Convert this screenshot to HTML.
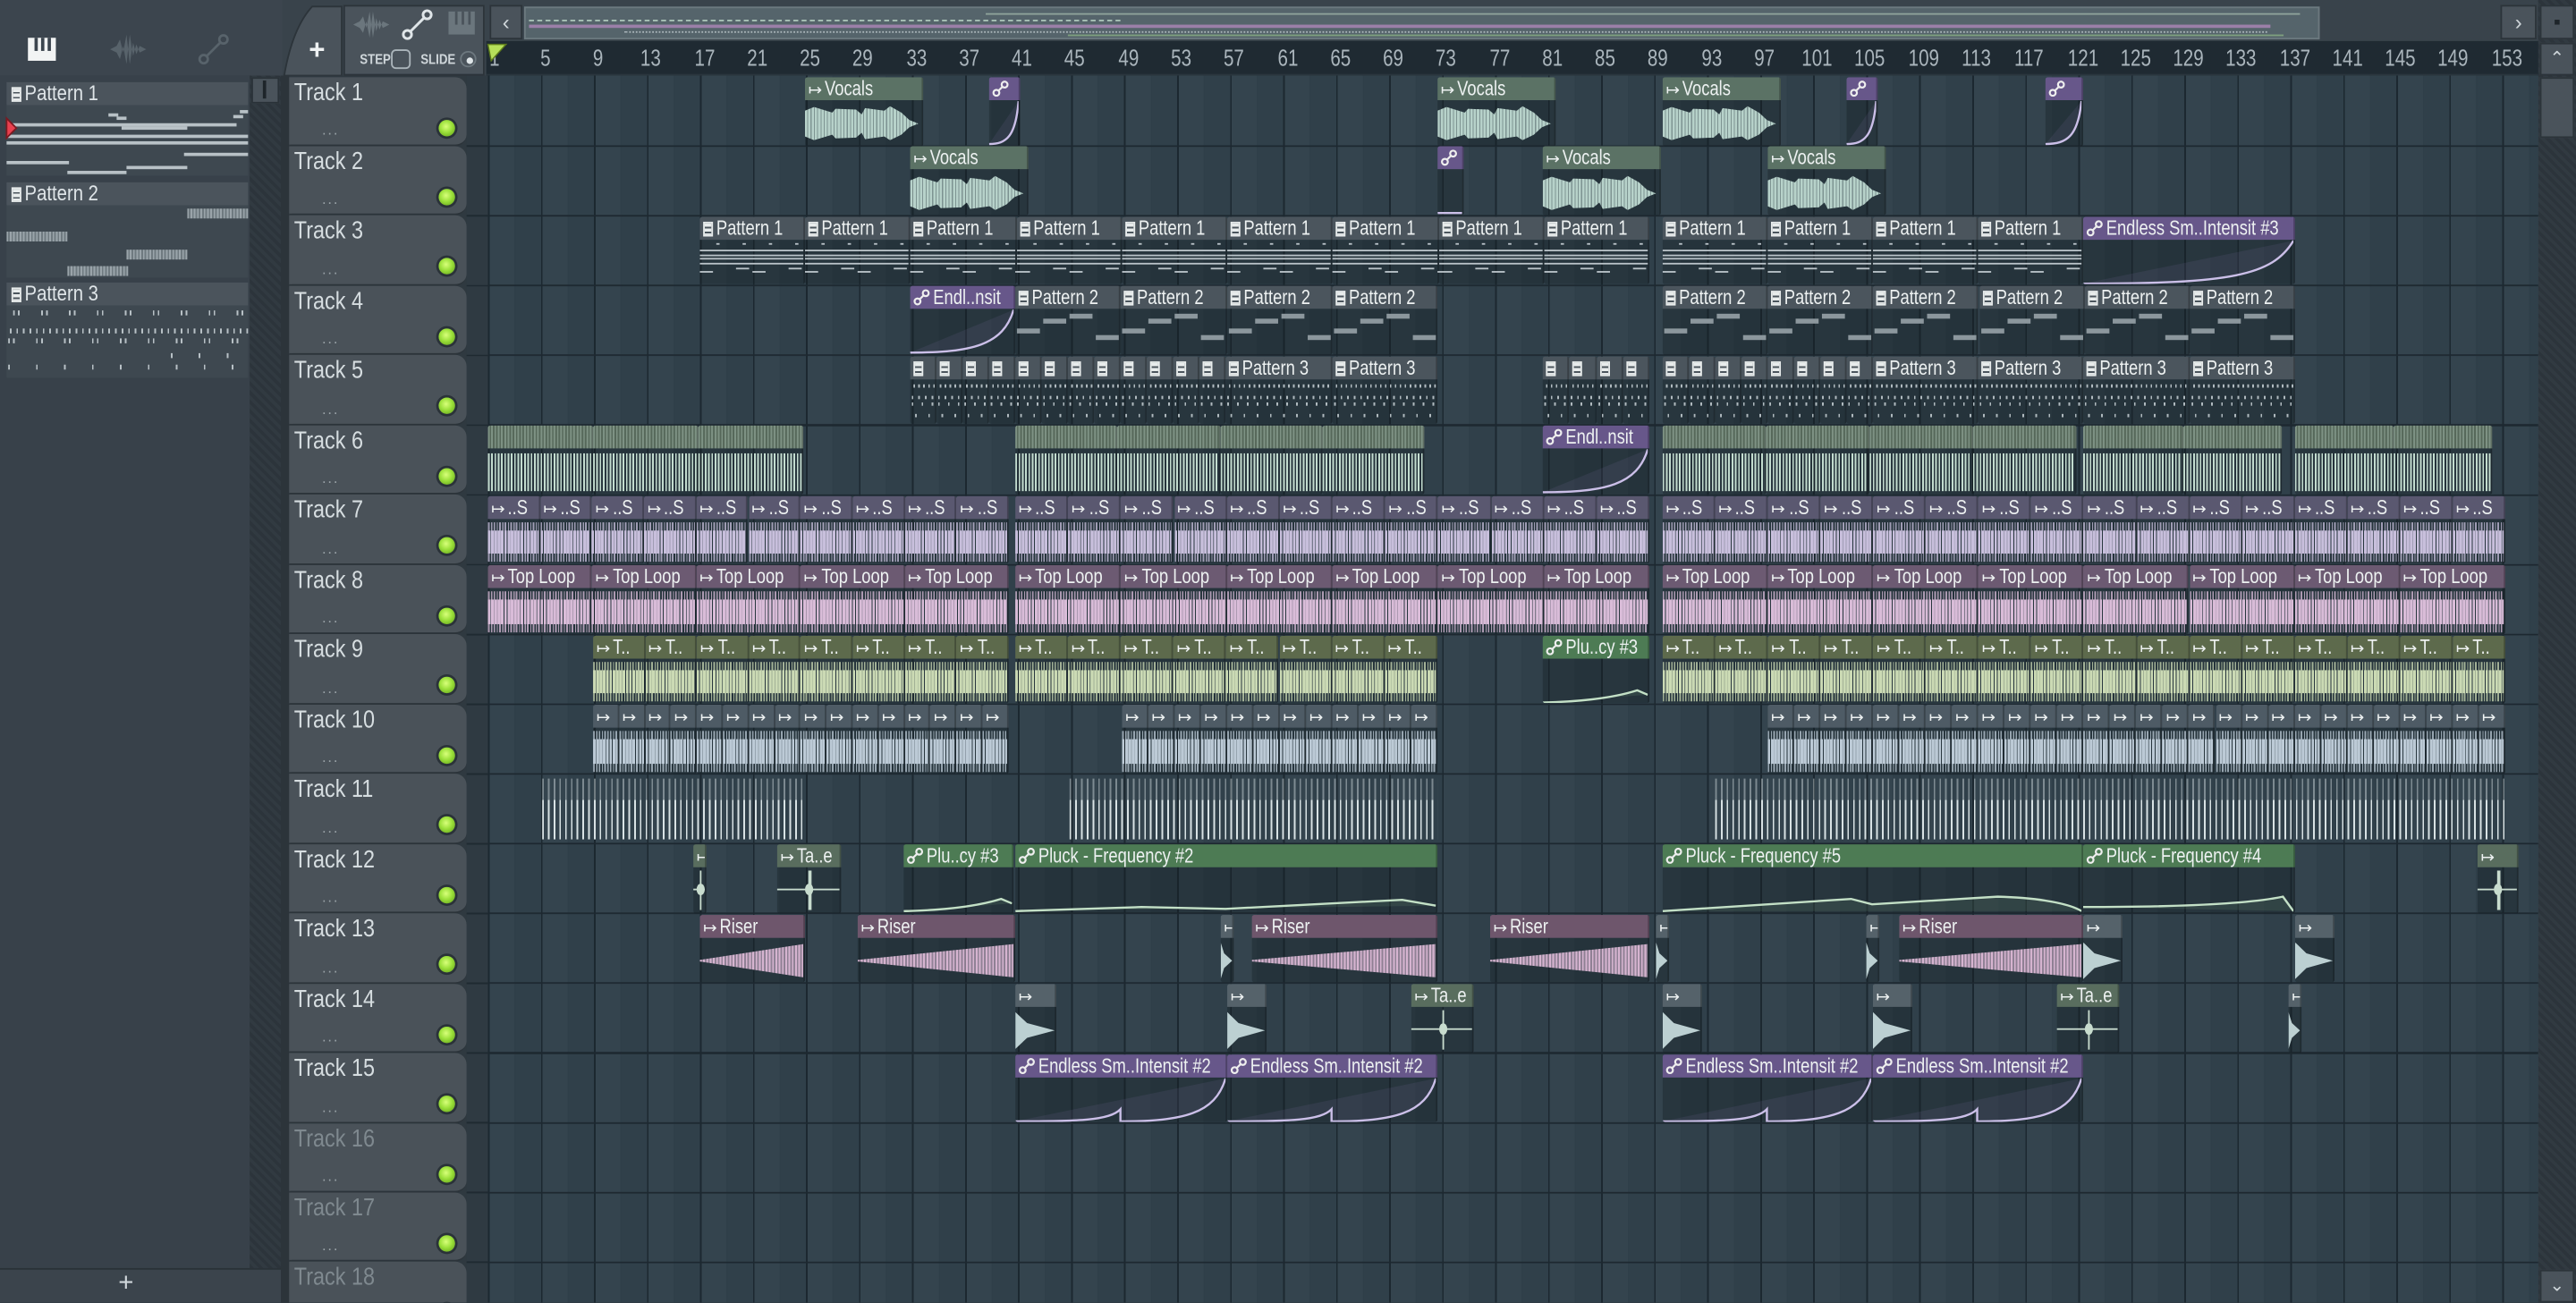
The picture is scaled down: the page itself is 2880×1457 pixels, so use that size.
<!DOCTYPE html>
<html><head><meta charset="utf-8">
<style>
html,body{margin:0;padding:0;width:2880px;height:1456px;overflow:hidden;background:#2f3940;}
#s{position:absolute;left:0;top:0;width:1568px;height:793px;transform:scale(1.83673);transform-origin:0 0;overflow:hidden;background:#2f3940;font-family:"Liberation Sans Narrow","Liberation Sans",sans-serif;color:#dfe5e8;}
.a{position:absolute;box-sizing:border-box;}
.clip{position:absolute;box-sizing:border-box;overflow:hidden;border-radius:1.5px;}
.hd{position:absolute;left:0;right:0;top:0;height:14px;white-space:nowrap;overflow:hidden;font-size:12.5px;line-height:14px;color:#edf1f1;padding-left:2px;border-right:1px solid rgba(0,0,0,.25);box-sizing:border-box;}
.hd .tx{display:inline-block;transform:scaleX(.8);transform-origin:0 50%;white-space:nowrap;}
.bd{position:absolute;left:0;right:0;top:14px;bottom:0;background:rgba(22,32,38,.38);border-right:1px solid rgba(0,0,0,.2);box-sizing:border-box;}
.pi{display:inline-block;width:6px;height:9px;margin-right:2px;vertical-align:-1px;background:repeating-linear-gradient(#e8ecec 0 2px,#4b555d 2px 3px);border:1px solid #e8ecec;box-sizing:border-box;}
.tl{position:absolute;left:176px;width:108px;background:#4a5259;border-radius:0 7px 7px 0;box-sizing:border-box;border-bottom:1px solid #2c343a;}
.tl .n{position:absolute;left:3px;top:1px;font-size:15px;color:#d6dde0;transform:scaleX(.85);transform-origin:0 0;white-space:nowrap;}
.tl .d{position:absolute;left:20px;bottom:4px;font-size:9px;color:#9aa3a8;letter-spacing:1px;}
.tl .led{position:absolute;left:91px;top:26px;width:10px;height:10px;border-radius:50%;background:radial-gradient(circle at 45% 40%,#d8ff7a 0,#9be03a 45%,#5c9a16 100%);box-shadow:0 0 0 1.5px #2a3238;}
.rn{position:absolute;top:27px;font-size:14px;color:#aab5bc;transform:translateX(-50%) scaleX(.8);}
.pt{font-size:13px;line-height:14px;padding-left:3px;white-space:nowrap;}
.pt span.t{display:inline-block;transform:scaleX(.85);transform-origin:0 50%;}
</style></head><body>
<div id="s">
<div class="a" style="left:0;top:0;width:172px;height:46px;background:#3c454e;"></div>
<div class="a" style="left:0;top:46px;width:152px;height:726px;background:#38414a;"></div>
<div class="a" style="left:152px;top:46px;width:19px;height:726px;background:repeating-linear-gradient(45deg,#2c343b 0 2px,#313a41 2px 4px);"></div>
<div class="a" style="left:153px;top:47px;width:17px;height:16px;background:#4a535b;border:1px solid #2a3238;"></div>
<div class="a" style="left:160px;top:49px;width:2px;height:11px;background:#1e252a;"></div>
<div class="a" style="left:0;top:772px;width:172px;height:21px;background:#3b444c;border-top:1px solid #2a3238;"></div>
<div class="a" style="left:72px;top:773px;font-size:16px;color:#cfd6da;">+</div>
<svg class="a" style="left:16px;top:22px" width="20" height="16" viewBox="0 0 20 16"><rect x="1" y="1" width="17" height="14" fill="#f2f4f4"/><rect x="5" y="1" width="2" height="8" fill="#3c454e"/><rect x="9" y="1" width="2" height="8" fill="#3c454e"/><rect x="13" y="1" width="2" height="8" fill="#3c454e"/></svg>
<svg class="a" style="left:66px;top:20px" width="24" height="20" viewBox="0 0 24 20"><path d="M1 10 L5 8 L7 4 L9 12 L11 1 L13 19 L15 6 L17 13 L19 8 L23 10 L19 12 L17 7 L15 14 L13 1 L11 19 L9 8 L7 16 L5 12Z" fill="#58636b"/></svg>
<svg class="a" style="left:120px;top:20px" width="20" height="20" viewBox="0 0 20 20"><circle cx="4" cy="16" r="2.5" fill="none" stroke="#58636b" stroke-width="1.5"/><circle cx="16" cy="4" r="2.5" fill="none" stroke="#58636b" stroke-width="1.5"/><line x1="6" y1="14" x2="14" y2="6" stroke="#58636b" stroke-width="1.5"/></svg>
<div class="a pt" style="left:4px;top:50px;width:147px;height:14px;background:#4b545c;"><span class="pi"></span><span class="t">Pattern 1</span></div>
<div class="a" style="left:4px;top:64px;width:147px;height:43px;background:#3e4850;">
<div class="a" style="left:62px;top:5px;width:6px;height:1.5px;background:#b8c1c6"></div><div class="a" style="left:67px;top:7px;width:6px;height:1.5px;background:#b8c1c6"></div>
<div class="a" style="left:138px;top:6px;width:6px;height:1.5px;background:#b8c1c6"></div><div class="a" style="left:142px;top:3px;width:5px;height:1.5px;background:#b8c1c6"></div>
<div class="a" style="left:0;top:11px;width:140px;height:1.5px;background:#b8c1c6"></div>
<div class="a" style="left:0;top:18px;width:147px;height:1.5px;background:#b8c1c6"></div>
<div class="a" style="left:0;top:22px;width:147px;height:1.5px;background:#b8c1c6"></div>
<div class="a" style="left:70px;top:13px;width:40px;height:1.5px;background:#b8c1c6"></div>
<div class="a" style="left:108px;top:29px;width:39px;height:1.5px;background:#b8c1c6"></div>
<div class="a" style="left:0;top:34px;width:38px;height:1.5px;background:#b8c1c6"></div>
<div class="a" style="left:73px;top:37px;width:37px;height:1.5px;background:#b8c1c6"></div>
<div class="a" style="left:37px;top:40px;width:36px;height:1.5px;background:#b8c1c6"></div>
</div>
<svg class="a" style="left:3px;top:71px" width="8" height="14"><path d="M1 1 L7 7 L1 13Z" fill="#e8404f" stroke="#7a1a22" stroke-width="1"/></svg>
<div class="a pt" style="left:4px;top:111px;width:147px;height:14px;background:#4b545c;"><span class="pi"></span><span class="t">Pattern 2</span></div>
<div class="a" style="left:4px;top:125px;width:147px;height:44px;background:#3e4850;">
<div class="a" style="left:110px;top:2px;width:37px;height:6px;background:repeating-linear-gradient(90deg,#9aa4aa 0 1px,#6f7a80 1px 2px)"></div>
<div class="a" style="left:0;top:16px;width:37px;height:6px;background:repeating-linear-gradient(90deg,#9aa4aa 0 1px,#6f7a80 1px 2px)"></div>
<div class="a" style="left:73px;top:27px;width:37px;height:6px;background:repeating-linear-gradient(90deg,#9aa4aa 0 1px,#6f7a80 1px 2px)"></div>
<div class="a" style="left:37px;top:37px;width:37px;height:6px;background:repeating-linear-gradient(90deg,#9aa4aa 0 1px,#6f7a80 1px 2px)"></div>
</div>
<div class="a pt" style="left:4px;top:172px;width:147px;height:14px;background:#4b545c;"><span class="pi"></span><span class="t">Pattern 3</span></div>
<div class="a" style="left:4px;top:186px;width:147px;height:44px;background:#3e4850;">
<div class="a" style="left:4px;top:3px;width:143px;height:3px;background:repeating-linear-gradient(90deg,#b8c1c6 0 1px,transparent 1px 3px,#b8c1c6 3px 4px,transparent 4px 17px)"></div>
<div class="a" style="left:2px;top:14px;width:145px;height:3px;background:repeating-linear-gradient(90deg,#b8c1c6 0 1px,transparent 1px 4px)"></div>
<div class="a" style="left:1px;top:20px;width:146px;height:3px;background:repeating-linear-gradient(90deg,#b8c1c6 0 1px,transparent 1px 3px,#b8c1c6 3px 4px,transparent 4px 17px)"></div>
<div class="a" style="left:100px;top:29px;width:47px;height:3px;background:repeating-linear-gradient(90deg,#b8c1c6 0 1px,transparent 1px 17px)"></div>
<div class="a" style="left:1px;top:36px;width:146px;height:3px;background:repeating-linear-gradient(90deg,#b8c1c6 0 1px,transparent 1px 17px)"></div>
</div>
<div class="a" style="left:172px;top:0;width:1373px;height:46px;background:#39434b;"></div>
<svg class="a" style="left:170px;top:3px" width="40" height="43"><path d="M20 1 H38 V43 H3 Q8 14 20 1Z" fill="#4a535b" stroke="#2c343a"/></svg>
<div class="a" style="left:188px;top:21px;font-size:17px;color:#eef1f2;font-weight:bold;">+</div>
<div class="a" style="left:209px;top:3px;width:86px;height:43px;background:#4a535b;border:1px solid #2c343a;"></div>
<svg class="a" style="left:214px;top:6px" width="24" height="18" viewBox="0 0 24 18"><path d="M1 9 L5 7 L7 4 L9 11 L11 1 L13 17 L15 5 L17 12 L19 7 L23 9 L19 11 L17 6 L15 13 L13 1 L11 17 L9 7 L7 14 L5 11Z" fill="#6b767d"/></svg>
<svg class="a" style="left:244px;top:5px" width="20" height="20" viewBox="0 0 20 20"><circle cx="4" cy="16" r="2.5" fill="none" stroke="#dfe5e8" stroke-width="1.6"/><circle cx="16" cy="4" r="2.5" fill="none" stroke="#dfe5e8" stroke-width="1.6"/><line x1="6" y1="14" x2="14" y2="6" stroke="#dfe5e8" stroke-width="1.6"/></svg>
<svg class="a" style="left:272px;top:6px" width="18" height="16"><rect x="1" y="1" width="16" height="14" fill="#6b767d"/><rect x="5" y="1" width="1.5" height="8" fill="#4a535b"/><rect x="9" y="1" width="1.5" height="8" fill="#4a535b"/><rect x="13" y="1" width="1.5" height="8" fill="#4a535b"/></svg>
<div class="a" style="left:219px;top:31px;font-size:8.5px;color:#cfd6da;font-weight:bold;transform:scaleX(.85);transform-origin:0 0;">STEP</div>
<div class="a" style="left:238px;top:30px;width:12px;height:12px;border:1.5px solid #aab4ba;border-radius:3px;"></div>
<div class="a" style="left:256px;top:31px;font-size:8.5px;color:#cfd6da;font-weight:bold;transform:scaleX(.85);transform-origin:0 0;">SLIDE</div>
<div class="a" style="left:280px;top:31px;width:10px;height:10px;border:1.5px solid #6d787f;border-radius:50%;"></div>
<div class="a" style="left:283.5px;top:34.5px;width:4px;height:4px;background:#dfe5e8;border-radius:50%;"></div>
<div class="a" style="left:298px;top:3px;width:20px;height:21px;background:#4a535b;border:1px solid #2c343a;color:#cfd6da;font-size:13px;text-align:center;line-height:19px;">&#8249;</div>
<div class="a" style="left:319px;top:4px;width:1093px;height:20px;background:#55646b;border:1px solid #6c797f;">
<div class="a" style="left:2px;top:7px;width:360px;height:1px;border-top:1px dashed #a9c2b7;"></div>
<div class="a" style="left:2px;top:10px;width:1060px;height:2px;background:#9b7fa8;"></div>
<div class="a" style="left:60px;top:14px;width:1000px;height:1px;border-top:1px dotted #a8b3b8;"></div>
<div class="a" style="left:280px;top:3px;width:800px;height:1px;background:#8fa39a;"></div>
<div class="a" style="left:330px;top:16px;width:740px;height:1px;background:#7ea07f;"></div>
</div>
<div class="a" style="left:1522px;top:3px;width:22px;height:21px;background:#4a535b;border:1px solid #2c343a;color:#cfd6da;font-size:13px;text-align:center;line-height:19px;">&#8250;</div>
<div class="a" style="left:1545px;top:0;width:23px;height:793px;background:repeating-linear-gradient(45deg,#2c343b 0 2px,#313a41 2px 4px);"></div>
<div class="a" style="left:1546px;top:3px;width:21px;height:21px;background:#4a535b;border:1px solid #2c343a;"></div>
<div class="a" style="left:1555px;top:12px;width:3px;height:3px;background:#1e252a;"></div>
<div class="a" style="left:1546px;top:26px;width:21px;height:20px;background:#4a535b;border:1px solid #2c343a;color:#cfd6da;font-size:11px;text-align:center;line-height:18px;">&#8963;</div>
<div class="a" style="left:1546px;top:47px;width:21px;height:37px;background:#4a535b;border:1px solid #2c343a;"></div>
<div class="a" style="left:1546px;top:773px;width:21px;height:20px;background:#4a535b;border:1px solid #2c343a;color:#cfd6da;font-size:11px;text-align:center;line-height:18px;">&#8964;</div>
<div class="a" style="left:296px;top:25px;width:1249px;height:21px;background:#1f2a32;border-bottom:1px solid #2a353d;"></div>
<div id="ruler"></div>
<svg class="a" style="left:296px;top:26px" width="14" height="12"><path d="M1 1 H12 L3 11Z" fill="#b6e05a" stroke="#5c7a1c" stroke-width=".8"/></svg>
<div class="a" style="left:171px;top:46px;width:5px;height:747px;background:#2c343a;"></div>
<div class="a" style="left:284px;top:46px;width:13px;height:747px;background:#2f3a42;background-image:repeating-linear-gradient(180deg,transparent 0 41.47px,#1f2a31 41.47px 42.47px);background-position:0 1px;"></div>
<div class="a" style="left:297px;top:46px;width:1248px;height:747px;background-color:#33434d;background-image:repeating-linear-gradient(180deg,transparent 0 41.47px,#1d2830 41.47px 42.47px),repeating-linear-gradient(90deg,#1c2830 0 1px,#34444e 1px 16.134px,#2f3f49 16.134px 17.134px,#30404a 17.134px 32.268px);background-position:0 1px,0 0;"></div>
<div id="tracks"></div>
<div id="clips"></div>
</div>
<script>
(function(){
var r='';
for(var b=1;b<=153;b+=4){var x=297.5+(b-1)*8.067;r+='<div class="rn" style="left:'+(b==1?x+3:x+2)+'px">'+b+'</div>';}
document.getElementById('ruler').innerHTML=r;
var T=function(i){return 46.5+(i-1)*42.47;};
var t='';
for(var i=1;i<=18;i++){var dim=i>15;
t+='<div class="tl" style="top:'+T(i)+'px;height:42.47px"><div class="n" style="color:'+(dim?'#7f898f':'#d6dde0')+'">Track '+i+'</div><div class="d">...</div><div class="led"></div></div>';}
document.getElementById('tracks').innerHTML=t;
var C={
voc:['#5b7265','#b7d2ca','aud'],aut:['#67578a','#cbbfe8','aut'],autg:['#4d7b54','#c3e0c6','autg'],
p1:['#4b555d','#b9c2c8','p1'],p2:['#4b555d','#8c979d','p2'],p3:['#4b555d','#b0babf','p3'],
t6:['#56685a','#c3dccf','dense'],t7:['#5a5870','#c8bfdc','aud2'],t8:['#6c5a72','#d9bcd8','aud2'],
t9:['#5d6a4c','#cbdab4','aud2'],t10:['#4e5b65','#bccad6','aud2'],t11:['','#d8e2e4','sparse'],
ris:['#6e566c','#d6b4d0','riser'],gr:['#55626a','#bcd0d2','hit'],tae:['#596d5e','#c8dcce','star']};
var autoIcon='<svg width="10" height="10" style="vertical-align:-1px;margin-right:2px"><circle cx="2.5" cy="7.5" r="1.8" fill="none" stroke="#eee" stroke-width="1.2"/><circle cx="7.5" cy="2.5" r="1.8" fill="none" stroke="#eee" stroke-width="1.2"/><line x1="3.8" y1="6.2" x2="6.2" y2="3.8" stroke="#eee" stroke-width="1.2"/></svg>';
var audIcon='<span style="font-size:10px;margin-right:2px">&#8614;</span>';
var out='';
function clip(tr,x1,x2,k,label,curve){
 var c=C[k],w=x2-x1,top=T(tr)+0.5,h=41.5,type=c[2];
 var s='<div class="clip" style="left:'+x1+'px;top:'+top+'px;width:'+w+'px;height:'+h+'px">';
 if(type!='sparse'){
  var ic=(type=='aut'||type=='autg')?autoIcon:(type.charAt(0)=='p'?'<span class="pi"></span>':(type=='dense'?'':audIcon));
  var hb=type=='dense'?'background:'+c[0]+';background-image:repeating-linear-gradient(90deg,rgba(200,225,210,.35) 0 1px,transparent 1px 2px)':'background:'+c[0];
  s+='<div class="hd" style="'+hb+'">'+ic+(w>20&&label?'<span class="tx">'+label+'</span>':'')+'</div>';
 }
 s+='<div class="bd" style="'+(type=='sparse'?'top:0;background:none;border:0':'')+'">';
 var col=c[1];
 if(type=='aud'){
  s+='<div class="a" style="left:0;right:2px;top:3px;bottom:2px;background:repeating-linear-gradient(90deg,'+col+' 0 1.4px,rgba(183,210,202,.6) 1.4px 2px);clip-path:polygon(0 15%,8% 5%,24% 20%,27% 10%,45% 12%,50% 25%,53% 8%,70% 15%,75% 3%,85% 20%,92% 40%,100% 50%,92% 60%,85% 80%,75% 95%,70% 85%,53% 92%,50% 75%,45% 88%,27% 90%,24% 80%,8% 95%,0 85%)"></div>';
 } else if(type=='aud2'){
  s+='<div class="a" style="left:0;right:0;top:2px;bottom:1px;background:repeating-linear-gradient(90deg,'+col+' 0 1px,transparent 1px 2px,'+col+' 2px 2.6px,transparent 2.6px 3.4px);opacity:.75"></div><div class="a" style="left:0;right:0;top:7px;bottom:6px;background:repeating-linear-gradient(90deg,'+col+' 0 1.5px,transparent 1.5px 2px);"></div>';
 } else if(type=='dense'){
  s+='<div class="a" style="left:0;right:0;top:3px;bottom:2px;background:repeating-linear-gradient(90deg,'+col+' 0 1px,transparent 1px 2px);"></div>';
 } else if(type=='sparse'){
  s+='<div class="a" style="left:0;right:0;top:2px;height:13px;background:repeating-linear-gradient(90deg,rgba(216,226,228,.45) 0 1px,transparent 1px 3.5px);"></div><div class="a" style="left:0;right:0;top:15px;bottom:2px;background:repeating-linear-gradient(90deg,'+col+' 0 1px,transparent 1px 3.5px);"></div>';
 } else if(type=='aut'||type=='autg'){
  var d=curve||'M0,97 C60,97 90,80 100,2';
  s+='<svg class="a" style="left:0;top:0" width="100%" height="100%" viewBox="0 0 100 100" preserveAspectRatio="none"><path d="'+d+'" fill="'+(type=='autg'?'rgba(120,170,130,.15)':'rgba(140,120,180,.12)')+'" stroke="'+col+'" stroke-width="1.3" vector-effect="non-scaling-stroke"/></svg>';
 } else if(type=='p1'){
  var ys=[6,9,11,14];for(var q=0;q<ys.length;q++) s+='<div class="a" style="left:0;right:0;top:'+ys[q]+'px;height:1.2px;background:'+col+'"></div>';
  for(var z=0;z<w;z+=16){s+='<div class="a" style="left:'+(z+(z/16%2?6:0))+'px;width:8px;top:'+(z/16%2?17:19)+'px;height:1.2px;background:'+col+'"></div><div class="a" style="left:'+(z+10)+'px;width:2px;top:2px;height:1.2px;background:'+col+'"></div>';}
 } else if(type=='p2'){
  var yy=[10,4,1,14];for(var z=0,j=0;z<w;z+=16,j++){s+='<div class="a" style="left:'+(z+1)+'px;width:14px;top:'+(yy[j%4]+2)+'px;height:3px;background:'+col+'"></div>';}
 } else if(type=='p3'){
  s+='<div class="a" style="left:2px;right:0;top:3px;height:2px;background:repeating-linear-gradient(90deg,'+col+' 0 1px,transparent 1px 3px)"></div><div class="a" style="left:1px;right:0;top:10px;height:2px;background:repeating-linear-gradient(90deg,'+col+' 0 1px,transparent 1px 4px)"></div><div class="a" style="left:1px;right:0;top:14px;height:2px;background:repeating-linear-gradient(90deg,'+col+' 0 1px,transparent 1px 6px)"></div><div class="a" style="left:3px;right:0;top:21px;height:2px;background:repeating-linear-gradient(90deg,'+col+' 0 1px,transparent 1px 8px)"></div>';
 } else if(type=='riser'){
  s+='<div class="a" style="left:0;right:0;top:3px;bottom:2px;background:repeating-linear-gradient(90deg,'+col+' 0 1px,rgba(214,180,208,.6) 1px 2px);clip-path:polygon(0 48%,100% 5%,100% 95%,0 52%)"></div>';
 } else if(type=='hit'){
  s+='<div class="a" style="left:0;right:0;top:3px;bottom:2px;background:'+col+';clip-path:polygon(0 0,30% 30%,100% 50%,30% 70%,0 100%)"></div>';
 } else if(type=='star'){
  s+='<div class="a" style="left:0;right:0;top:13px;height:1px;background:'+col+'"></div><div class="a" style="left:50%;width:1.5px;top:2px;bottom:2px;background:'+col+'"></div><div class="a" style="left:calc(50% - 2px);width:5px;top:10px;height:7px;background:'+col+';border-radius:50%"></div>';
 }
 s+='</div></div>';out+=s;
}
function rep(tr,x1,x2,step,k,label,curve){for(var x=x1;x<x2-1;x+=step){clip(tr,x,Math.min(x+step,x2),k,label,curve);}}
var ex='M0,97 C60,97 90,80 100,2';
clip(1,490,562,'voc','Vocals');clip(1,602,621,'aut','',ex);clip(1,875,947,'voc','Vocals');clip(1,1012,1084,'voc','Vocals');clip(1,1124,1143,'aut','',ex);clip(1,1245,1268,'aut','',ex);
clip(2,554,626,'voc','Vocals');clip(2,875,891,'aut','','M0,97 L100,97');clip(2,939,1011,'voc','Vocals');clip(2,1076,1148,'voc','Vocals');
rep(3,426,1004,64.22,'p1','Pattern 1');rep(3,1012,1268,64,'p1','Pattern 1');clip(3,1268,1397,'aut','Endless Sm..Intensit #3','M0,97 C70,97 90,80 100,2');
clip(4,554,618,'aut','Endl..nsit',ex);rep(4,618,875,64.25,'p2','Pattern 2');rep(4,1012,1397,64.17,'p2','Pattern 2');
rep(5,554,746,16,'p3','');rep(5,746,875,64.5,'p3','Pattern 3');rep(5,939,1004,16.25,'p3','');rep(5,1012,1140,16,'p3','');rep(5,1140,1268,64,'p3','Pattern 3');rep(5,1268,1397,64.5,'p3','Pattern 3');
rep(6,297,489,64,'t6','');rep(6,618,867,62.25,'t6','');clip(6,939,1004,'aut','Endl..nsit',ex);rep(6,1012,1264,63,'t6','');rep(6,1268,1389,60.5,'t6','');rep(6,1397,1517,60,'t6','');
rep(7,297,614,31.7,'t7','..S');rep(7,618,1004,32.17,'t7','..S');rep(7,1012,1525,32.06,'t7','..S');
rep(8,297,614,63.4,'t8','Top Loop');rep(8,618,1004,64.33,'t8','Top Loop');rep(8,1012,1525,64.1,'t8','Top Loop');
rep(9,361,614,31.6,'t9','T..');rep(9,618,875,32.1,'t9','T..');clip(9,939,1004,'autg','Plu..cy #3','M0,97 C40,95 70,85 90,70 L100,80');rep(9,1012,1525,32.06,'t9','T..');
rep(10,361,614,15.8,'t10','');rep(10,683,875,16,'t10','');rep(10,1076,1525,16.03,'t10','');
clip(11,330,489,'t11','');clip(11,651,875,'t11','');clip(11,1044,1525,'t11','');
clip(12,422,430,'tae','');clip(12,473,512,'tae','Ta..e');clip(12,550,617,'autg','Plu..cy #3','M0,97 C40,95 70,85 90,70 L100,80');
clip(12,618,875,'autg','Pluck - Frequency #2','M0,97 L30,88 L50,92 L92,72 L100,85');clip(12,1012,1268,'autg','Pluck - Frequency #5','M0,97 L45,70 L50,82 L80,65 C92,68 98,85 100,97');
clip(12,1268,1397,'autg','Pluck - Frequency #4','M0,88 C50,88 80,80 95,65 L100,97');clip(12,1508,1533,'tae','');
clip(13,426,490,'ris','Riser');clip(13,522,618,'ris','Riser');clip(13,743,751,'gr','');clip(13,762,875,'ris','Riser');clip(13,907,1004,'ris','Riser');
clip(13,1008,1016,'gr','');clip(13,1136,1144,'gr','');clip(13,1156,1268,'ris','Riser');clip(13,1268,1292,'gr','');clip(13,1397,1421,'gr','');
clip(14,618,643,'gr','');clip(14,747,771,'gr','');clip(14,859,897,'tae','Ta..e');clip(14,1012,1036,'gr','');clip(14,1140,1164,'gr','');clip(14,1252,1290,'tae','Ta..e');clip(14,1393,1401,'gr','');
var en='M0,97 C30,97 45,95 50,70 L50,97 C80,97 95,80 100,2';
clip(15,618,747,'aut','Endless Sm..Intensit #2',en);clip(15,747,875,'aut','Endless Sm..Intensit #2',en);clip(15,1012,1140,'aut','Endless Sm..Intensit #2',en);clip(15,1140,1268,'aut','Endless Sm..Intensit #2',en);
document.getElementById('clips').innerHTML=out;
})();
</script>
</body></html>
